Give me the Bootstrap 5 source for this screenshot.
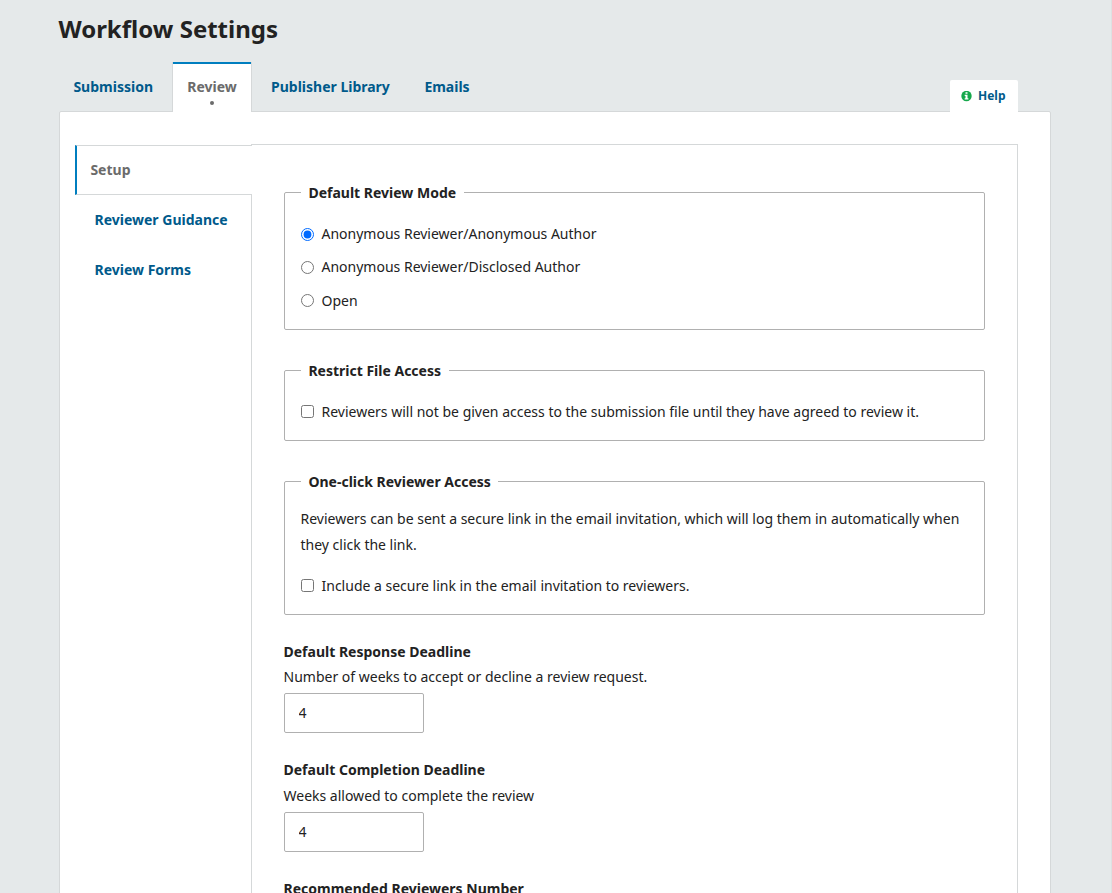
<!DOCTYPE html>
<html lang="en">
<head>
<meta charset="utf-8">
<meta name="viewport" content="width=device-width, initial-scale=1">
<title>Workflow Settings</title>
<link href="https://cdn.jsdelivr.net/npm/bootstrap@5.3.0/dist/css/bootstrap.min.css" rel="stylesheet">
<style>
:root{--line:#d5d8d9;--ink:#222;--link:#005a8b;--muted:#6b6b6b;--accent:#007ebf;--field:#b0b0b0}
body{background:#e5e9ea;color:var(--ink);font:14px/25.6px "Noto Sans",sans-serif;height:893px;overflow:hidden;border-right:1px solid #dde1e2}
.page-wrap{width:992px;margin-left:59px;padding-top:11px}
h1{font-size:24px;line-height:36px;font-weight:700;margin:0 0 15px;text-indent:-.6px}
a{color:var(--link);font-weight:700;text-decoration:none}
.top-tabs{height:49px}
.top-tabs a{padding:12px 15px 0}
.top-tabs .first-tab{width:113px;padding-left:14.4px}
.top-tabs .library-tab{padding-left:19px;padding-right:19.5px}
.top-tabs .current{width:80px;height:50px;color:var(--muted);text-align:center;border:1px solid var(--line);border-width:0 1px;background:linear-gradient(var(--accent) 2px,#fff 2px);position:relative;z-index:1;padding:12px 0 0}
.current .dot{width:4px;height:4px;left:37px;top:39px;background:var(--muted)}
.top-tabs .help-tab{width:68px;height:32px;font-size:12px;line-height:30px;margin:0 33px -1px 0;position:relative;z-index:1;border-radius:2px 2px 0 0;padding:0 0 0 11px;gap:6px}
.panel{border:1px solid var(--line);height:900px;border-radius:2px;padding:32px 32px 0 15px}
.side{width:177px;padding-top:1px;margin-right:-1px;position:relative;z-index:1}
.side a{display:block;height:50px;padding:12px 0 0 19.5px}
.side .active-item{color:var(--muted);padding-left:13.4px;padding-top:11px;border:1px solid var(--line);border-left:2px solid var(--accent);border-right:0;background:#fff}
.content-box{border:1px solid var(--line);height:900px;padding:32px 32px 0 32px;min-width:0}
.group{position:relative;border:1px solid var(--field);border-radius:2px;width:701px;padding:0 16px;margin-top:15px}
.group legend{position:absolute;top:-13px;left:16px;width:auto;margin:0;padding:0 7.6px 0 7.4px;background:#fff;font-size:14px;line-height:26px;font-weight:700}
.group p{margin:0 0 0 -.5px}
.choice{display:flex;align-items:center;height:26px;gap:7.5px}
.choice input{width:13px;height:13px;margin:1px 0 0;flex:none;accent-color:#006aff}
.choice input[type=checkbox],.choice .last-radio{margin-top:-1px}
.num{width:140px;height:40px;border:1px solid var(--field);border-radius:2px;padding:0 14px 2px 13.5px;color:var(--ink);background:#fff;display:block;font-size:14px}
.field-name{font-weight:700;display:block;line-height:25px;margin-left:-.5px}
.hint{line-height:26px;margin-left:-.5px}
</style>
</head>
<body>
<main class="page-wrap">
  <h1>Workflow Settings</h1>
  <nav class="top-tabs d-flex align-items-start">
    <a href="#" class="first-tab">Submission</a>
    <a href="#" class="current">Review<span class="dot position-absolute rounded-circle"></span></a>
    <a href="#" class="library-tab">Publisher Library</a>
    <a href="#">Emails</a>
    <a href="#" class="help-tab bg-white ms-auto align-self-end d-flex align-items-center">
      <svg width="11" height="11" viewBox="0 0 11 11"><circle cx="5.5" cy="5" r="5.2" fill="#16a84c"/><path d="M4.5 1.2h2v1.5h-2zM3.7 3.7h2.8v3.5h.9v1.3H3.7V7.2h.8V5h-.8z" fill="#fff"/></svg>Help</a>
  </nav>
  <section class="panel bg-white d-flex">
    <nav class="side flex-shrink-0">
      <a href="#" class="active-item">Setup</a>
      <a href="#">Reviewer Guidance</a>
      <a href="#">Review Forms</a>
    </nav>
    <form class="content-box flex-grow-1">
      <fieldset class="group" style="height:138px;padding-top:28px">
        <legend>Default Review Mode</legend>
        <label class="choice"><input type="radio" name="mode" checked>Anonymous Reviewer/Anonymous Author</label>
        <label class="choice" style="margin-top:7px">
          <input type="radio" name="mode">Anonymous Reviewer/Disclosed Author</label>
        <label class="choice" style="margin-top:7.5px"><input type="radio" name="mode" class="last-radio">Open</label>
      </fieldset>
      <fieldset class="group" style="height:71px;margin-top:40px;padding-top:28px">
        <legend>Restrict File Access</legend>
        <label class="choice"><input type="checkbox">Reviewers will not be given access to the submission file until they have agreed to review it.</label>
      </fieldset>
      <fieldset class="group" style="height:134px;margin-top:40px;padding-top:24px">
        <legend>One-click Reviewer Access</legend>
        <p>Reviewers can be sent a secure link in the email invitation, which will log them in automatically when they click the link.</p>
        <label class="choice" style="margin-top:16px"><input type="checkbox">Include a secure link in the email invitation to reviewers.</label>
      </fieldset>
      <div style="margin-top:24px">
        <label class="field-name" for="resp">Default Response Deadline</label>
        <div class="hint">Number of weeks to accept or decline a review request.</div>
        <input id="resp" class="num" value="4" style="margin-top:3px">
      </div>
      <div style="margin-top:24px">
        <label class="field-name" for="comp">Default Completion Deadline</label>
        <div class="hint" style="margin-top:1px">Weeks allowed to complete the review</div>
        <input id="comp" class="num" value="4" style="margin-top:3px">
      </div>
      <div style="margin-top:24px"><label class="field-name">Recommended Reviewers Number</label></div>
    </form>
  </section>
</main>
<script src="https://cdn.jsdelivr.net/npm/bootstrap@5.3.0/dist/js/bootstrap.bundle.min.js"></script>
</body>
</html>
